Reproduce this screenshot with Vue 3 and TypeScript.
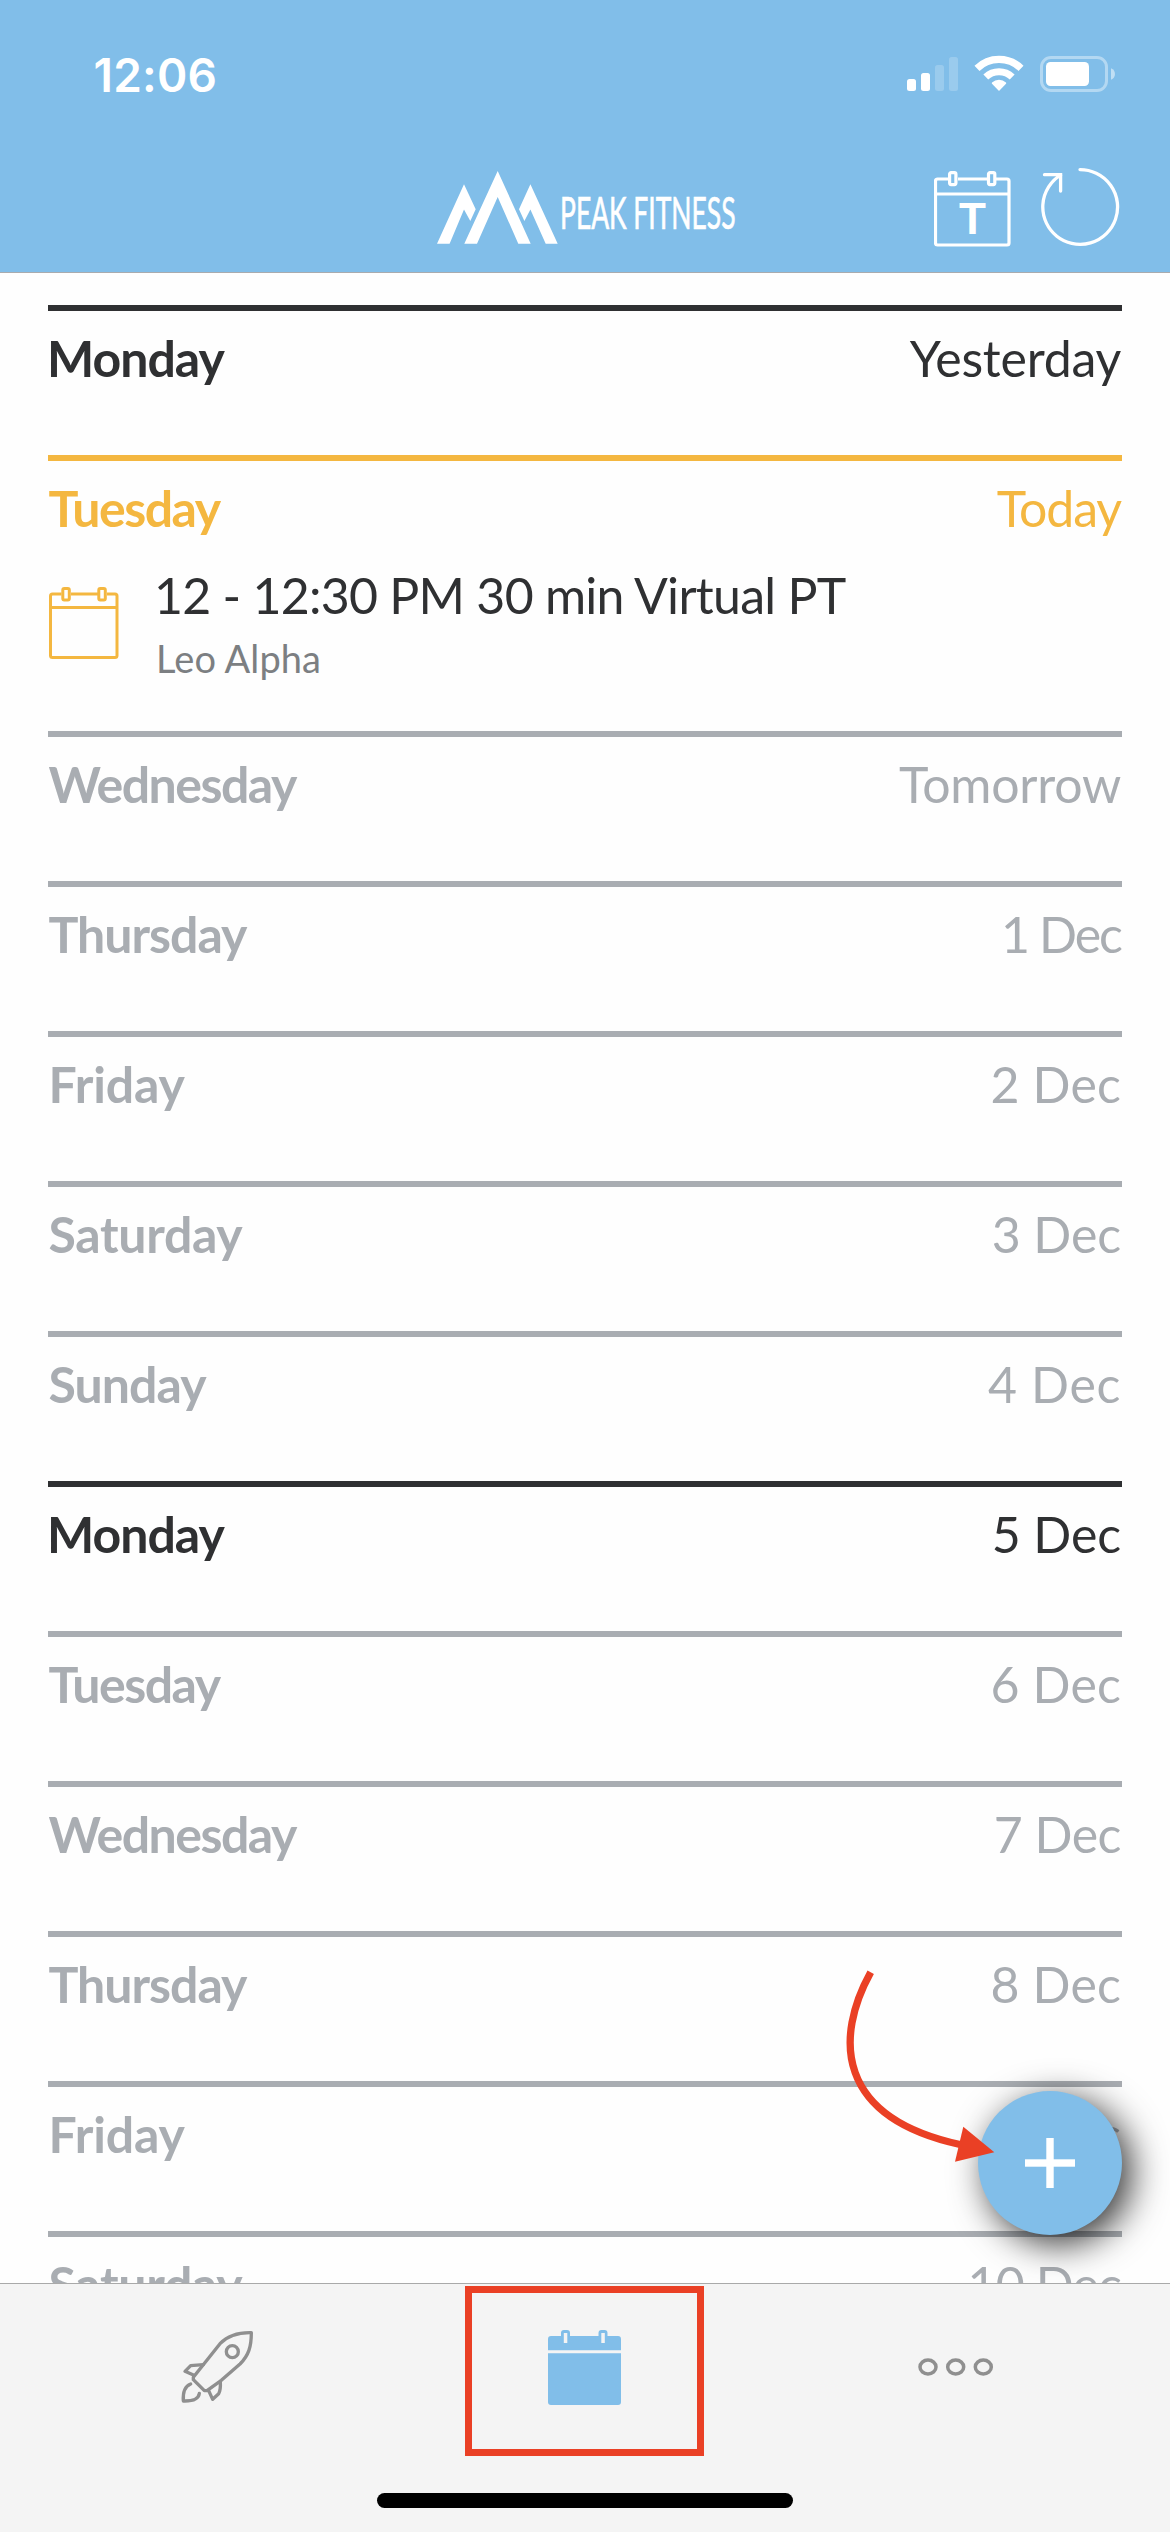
<script setup lang="ts">
type Tone = 'dark' | 'today' | 'muted'

interface Session {
  title: string
  client: string
}

interface Day {
  name: string
  date: string
  tone: Tone
  dateTracking: number
  session?: Session
}

const nameTracking: Record<string, number> = {
  Monday: -1,
  Tuesday: -1.5,
  Wednesday: -1.5,
  Thursday: -1,
  Friday: -0.13,
  Saturday: -0.3,
  Sunday: -0.95,
}

const days: Day[] = [
  { name: 'Monday', date: 'Yesterday', tone: 'dark', dateTracking: -0.22 },
  {
    name: 'Tuesday',
    date: 'Today',
    tone: 'today',
    dateTracking: -1.1,
    session: { title: '12 - 12:30 PM 30 min Virtual PT', client: 'Leo Alpha' },
  },
  { name: 'Wednesday', date: 'Tomorrow', tone: 'muted', dateTracking: -0.23 },
  { name: 'Thursday', date: '1 Dec', tone: 'muted', dateTracking: -1.97 },
  { name: 'Friday', date: '2 Dec', tone: 'muted', dateTracking: 0.16 },
  { name: 'Saturday', date: '3 Dec', tone: 'muted', dateTracking: -0.09 },
  { name: 'Sunday', date: '4 Dec', tone: 'muted', dateTracking: 0.66 },
  { name: 'Monday', date: '5 Dec', tone: 'dark', dateTracking: -0.09 },
  { name: 'Tuesday', date: '6 Dec', tone: 'muted', dateTracking: 0.16 },
  { name: 'Wednesday', date: '7 Dec', tone: 'muted', dateTracking: -0.5 },
  { name: 'Thursday', date: '8 Dec', tone: 'muted', dateTracking: 0.16 },
  { name: 'Friday', date: '9 Dec', tone: 'muted', dateTracking: 0.16 },
  { name: 'Saturday', date: '10 Dec', tone: 'muted', dateTracking: -0.88 },
]
</script>

<template>
  <div class="phone">
    <header class="header">
      <div class="status">
        <span class="clock">12:06</span>
        <svg class="status-icons" viewBox="0 0 210 40" width="210" height="40" fill="#fff">
          <rect x="2" y="26" width="9" height="12" rx="2.5" />
          <rect x="16" y="20" width="9" height="18" rx="2.5" />
          <rect x="30" y="12" width="9" height="26" rx="2.5" opacity=".2" />
          <rect x="44" y="4" width="9" height="34" rx="2.5" opacity=".2" />
          <g fill="none" stroke="#fff">
            <path d="M72 15.3A31.5 31.5 0 0 1 116 15.3" stroke-width="7.2" />
            <path d="M80.8 24A19 19 0 0 1 107.2 24" stroke-width="7" />
          </g>
          <path d="M94 38l-7-7.2a1 1 0 0 1 0-1.3a10.5 10.5 0 0 1 14 0a1 1 0 0 1 0 1.3z" />
          <rect x="136.5" y="4.5" width="65" height="33" rx="9.5" fill="none" stroke="#fff" stroke-width="3" opacity=".4" />
          <rect x="141" y="9" width="43" height="24" rx="4.5" />
          <path d="M206 15.2c5.300 2 5.300 9.600 0 11.600z" opacity=".5" />
        </svg>
      </div>
      <div class="nav">
        <svg class="logo" viewBox="0 0 320 76" width="320" height="76" fill="#fff">
          <path d="M0 73.700L27 14.300L38.700 39.300L33.300 51L27 39.500L12.600 73.700Z" />
          <path d="M27.300 73.700L60.700 1L93.700 73.700H81.300L60.700 27L40 73.700Z" />
          <path d="M120.700 73.700L93.400 14.300L82 39.300L87.400 51L93.400 39.500L108.700 73.700Z" />
          <text x="123" y="58.800" font-size="44" textLength="175.500" lengthAdjust="spacingAndGlyphs" stroke="#fff" stroke-width=".7">PEAK FITNESS</text>
        </svg>
        <div class="actions">
          <svg viewBox="0 0 78 80" width="78" height="80" fill="none" stroke="#fff" stroke-width="3.2">
            <path d="M15 9H3.500a2 2 0 0 0-2 2V73a2 2 0 0 0 2 2H73a2 2 0 0 0 2-2V11a2 2 0 0 0-2-2H62M24 9H54M1.500 24H75" />
            <rect x="15.600" y="2.600" width="6.300" height="12" rx="1.500" />
            <rect x="54.500" y="2.600" width="6.300" height="12" rx="1.500" />
            <text class="t-mark" x="38.500" y="64" font-size="44" text-anchor="middle">T</text>
          </svg>
          <svg viewBox="0 0 80 80" width="80" height="80" fill="none" stroke="#fff" stroke-width="3.300" stroke-linecap="round">
            <path d="M40 2.600A37.400 37.400 0 1 1 20.500 8.200" />
            <path d="M4.500 7.700H20.600V24" />
          </svg>
        </div>
      </div>
    </header>

    <main class="agenda">
      <section v-for="day in days" :key="day.name + day.date" class="day" :class="day.tone">
        <div class="day-head">
          <span class="name" :class="{ pull: day.name === 'Monday' }" :style="{ letterSpacing: nameTracking[day.name] + 'px' }">{{ day.name }}</span>
          <span class="date" :style="{ letterSpacing: day.dateTracking + 'px' }">{{ day.date }}</span>
        </div>
        <div v-if="day.session" class="session">
          <svg viewBox="0 0 70 74" width="70" height="74" fill="none" stroke="#f4b740" stroke-width="3">
            <path d="M12.500 8H3.500a2 2 0 0 0-2 2V69.500a2 2 0 0 0 2 2H66a2 2 0 0 0 2-2V10a2 2 0 0 0-2-2H58M22 8H49M1.500 21.500H68" />
            <rect x="13.800" y="2.500" width="6.500" height="11.500" rx="1.500" />
            <rect x="49.800" y="2.500" width="6.500" height="11.500" rx="1.500" />
          </svg>
          <div class="session-text">
            <div class="session-title">{{ day.session.title }}</div>
            <div class="session-client">{{ day.session.client }}</div>
          </div>
        </div>
      </section>
      <button class="fab" aria-label="Add">
        <svg viewBox="0 0 50 50" width="50" height="50" fill="#fff">
          <rect x="0" y="21.300" width="50" height="7.400" />
          <rect x="21.300" y="0" width="7.400" height="50" />
        </svg>
      </button>
      <svg class="arrow" viewBox="0 0 160 220" width="160" height="220">
        <path d="M50.700 22.300C15 87 15 167 140 194.500" fill="none" stroke="#ea4025" stroke-width="7.300" />
        <path d="M174.300 202.300L143.300 176.700L135 211.700Z" fill="#ea4025" />
      </svg>
    </main>

    <footer class="tabs">
      <div class="tab-row">
        <div class="tab">
          <svg viewBox="0 0 222 222" width="74" height="74" fill="none" stroke="#8f8f8f" stroke-width="10" stroke-linejoin="round" stroke-linecap="round">
            <path d="M214 8C176 7 146 14 120 41L40 142V149L73 182H81L124 151L180 102C206 76 214 50 214 8Z" />
            <circle cx="157" cy="65" r="18" />
            <path d="M70 104L32 107L15 124L42 136M121 156C122 172 120 184 116 191L98 208L87 184" />
            <path d="M32 162C14 169 8 184 10 213C42 214 56 207 58 190" />
          </svg>
        </div>
        <div class="tab active">
          <svg viewBox="0 0 73 76" width="73" height="76" fill="#81bee9">
            <path d="M3 7H13V4a3 3 0 0 1 3-3H19a3 3 0 0 1 3 3V7H50.500V4a3 3 0 0 1 3-3H56.500a3 3 0 0 1 3 3V7H70a3 3 0 0 1 3 3V21.300H0V10a3 3 0 0 1 3-3Z" />
            <path d="M0 24.300H73V73a3 3 0 0 1-3 3H3a3 3 0 0 1-3-3Z" />
            <rect x="15.800" y="4" width="3.500" height="10" fill="#f4f4f4" />
            <rect x="53.300" y="4" width="3.500" height="10" fill="#f4f4f4" />
          </svg>
          <span class="highlight"></span>
        </div>
        <div class="tab">
          <svg viewBox="0 0 76 18" width="76" height="18" fill="none" stroke="#8f8f8f" stroke-width="3.500">
            <ellipse cx="10" cy="9" rx="8" ry="6.900" />
            <ellipse cx="37.700" cy="9" rx="8" ry="6.900" />
            <ellipse cx="65.300" cy="9" rx="8" ry="6.900" />
          </svg>
        </div>
      </div>
      <div class="home-indicator"></div>
    </footer>
  </div>
</template>

<style>
body {
  margin: 0;
}
</style>

<style scoped>
.phone {
  display: flex;
  flex-direction: column;
  width: 1170px;
  height: 2532px;
  overflow: hidden;
  background: #fefefe;
  font-family: Lato, "Liberation Sans", sans-serif;
}
.header {
  flex: none;
  box-sizing: border-box;
  height: 273px;
  background: #81bee9;
  border-bottom: 1px solid #a9abae;
}
.status {
  display: flex;
  justify-content: space-between;
  box-sizing: border-box;
  height: 150px;
  padding: 47px 55px 0 93.5px;
}
.clock {
  color: #fff;
  font: 600 46px/56px Inter, sans-serif;
  letter-spacing: 0.22px;
}
.status-icons {
  margin-top: 6px;
}
.nav {
  display: flex;
  justify-content: space-between;
  padding: 20px 50px 0 436.5px;
}
.logo {
  flex: none;
  margin-right: -40px;
  overflow: visible;
  font-family: Lato, sans-serif;
}
.actions {
  display: flex;
  gap: 28px;
}
.actions svg:last-child {
  margin-top: -3px;
}
.t-mark {
  fill: #fff;
  stroke: none;
  font-family: "Liberation Sans", sans-serif;
  font-weight: 700;
}
.agenda {
  position: relative;
  flex: none;
  box-sizing: border-box;
  height: 2010px;
  padding: 32px 48px 0;
  overflow: hidden;
}
.day {
  box-sizing: border-box;
  height: 150px;
  padding-top: 17px;
  border-top: 6px solid #a9adb2;
  color: #a9adb2;
}
.day.dark {
  color: #2f3032;
  border-color: #2f3032;
}
.day.today {
  height: 276px;
  color: #f4b740;
  border-color: #f4b740;
}
.day-head {
  display: flex;
  justify-content: space-between;
  padding: 0 1px 0 0.5px;
  font-size: 50px;
  line-height: 60px;
  white-space: nowrap;
}
.name {
  font-weight: 700;
}
.pull {
  margin-left: -1.5px;
}
.session {
  display: flex;
  gap: 35px;
  padding-top: 27px;
}
.session svg {
  flex: none;
  margin: 21px 0 0 1px;
}
.session-title {
  color: #2f3032;
  font-size: 50px;
  line-height: 60px;
  letter-spacing: -0.74px;
  white-space: nowrap;
}
.session-client {
  margin: 10px 0 0 2px;
  color: #7c7f82;
  font-size: 38px;
  line-height: 46px;
  letter-spacing: 0.1px;
}
.fab {
  position: absolute;
  top: 1818px;
  left: 978px;
  display: flex;
  align-items: center;
  justify-content: center;
  width: 144px;
  height: 144px;
  padding: 0;
  border: 0;
  border-radius: 50%;
  background: #81bee9;
  box-shadow: 9px 9px 36px rgba(0, 0, 0, 0.8);
}
.arrow {
  position: absolute;
  top: 1677px;
  left: 820px;
  overflow: visible;
}
.tabs {
  display: flex;
  flex: 1;
  flex-direction: column;
  align-items: center;
  justify-content: space-between;
  box-sizing: border-box;
  padding-bottom: 24px;
  border-top: 1px solid #a9a9a9;
  background: #f4f4f4;
}
.tab-row {
  display: flex;
  width: 1108px;
  height: 165px;
}
.tab {
  position: relative;
  display: flex;
  flex: 1;
  align-items: center;
  justify-content: center;
}
.tab:first-child svg,
.tab:last-child svg {
  margin-left: 3px;
}
.highlight {
  position: absolute;
  top: 2px;
  left: 65px;
  box-sizing: border-box;
  width: 239px;
  height: 170px;
  border: 7.5px solid #ea4025;
}
.home-indicator {
  width: 416px;
  height: 15px;
  border-radius: 8px;
  background: #000;
}
</style>
